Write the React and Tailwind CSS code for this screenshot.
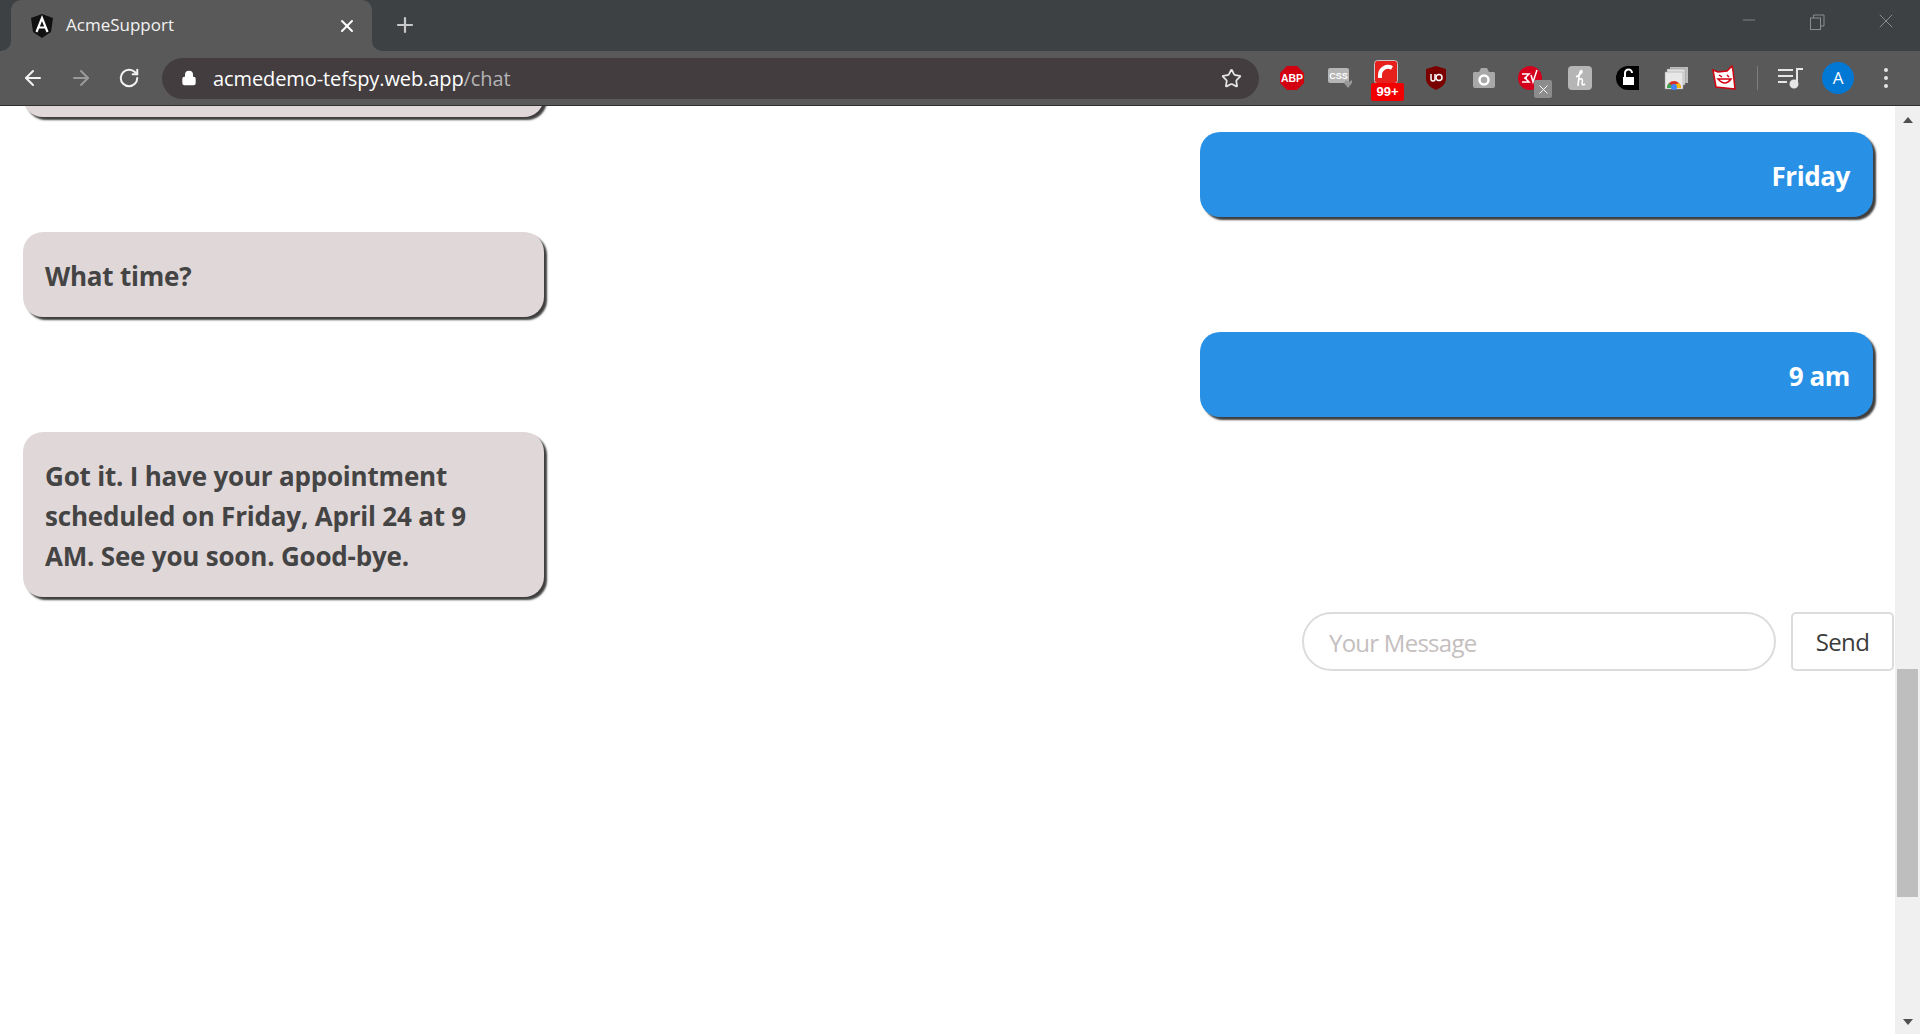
import React from "react";
import { ArrowLeft, ArrowRight, RotateCw, Lock, Star, Plus, X, Minus } from "lucide-react";

const font = "font-['Open_Sans','Noto_Sans',sans-serif]";

const LeftBubble = ({ children, className = "" }) => (
  <div className={`self-start ml-[23px] w-[521px] rounded-[20px] bg-[#e0d7d8] pl-[22px] pr-[40px] py-[22.5px] shadow-[3px_3px_2px_#3f3f3f] text-[#444444] text-[26px] leading-[40px] font-bold tracking-[-0.2px] ${className}`}>
    <div className="translate-y-[1px]">{children}</div>
  </div>
);

const RightBubble = ({ children }) => (
  <div className="self-end mr-[22px] w-[673px] h-[85px] rounded-[20px] bg-[#2891e6] pr-[23px] pt-[3px] flex items-center justify-end shadow-[3px_3px_2px_#3f3f3f] text-white text-[26px] font-bold tracking-[-0.4px]">
    {children}
  </div>
);

const Slot = ({ children }) => (
  <div className="relative w-12 h-12 flex items-center justify-center shrink-0">{children}</div>
);

const Extensions = () => (
  <div className="flex items-center ml-[9px]">
    <Slot>
      <svg width="26" height="26" viewBox="0 0 26 26">
        <polygon points="8,1 18,1 25,8 25,18 18,25 8,25 1,18 1,8" fill="#d3000f" />
        <text x="13" y="17" textAnchor="middle" fontSize="10.5" fontWeight="700" fill="#fff" fontFamily="Liberation Sans">ABP</text>
      </svg>
    </Slot>
    <Slot>
      <svg width="26" height="26" viewBox="0 0 26 26">
        <rect x="1" y="3" width="21" height="15" rx="2" fill="#b5b5b5" />
        <text x="11.5" y="14" textAnchor="middle" fontSize="9" fontWeight="700" fill="#fff" fontFamily="Liberation Sans">CSS</text>
        <polygon points="19,15 22,17 25,15 25,18 21,23 17,18" fill="#999" />
      </svg>
    </Slot>
    <Slot>
      <svg width="24" height="24" viewBox="0 0 24 24" className="-mt-3 -ml-1">
        <rect x="0.5" y="0.5" width="23" height="23" rx="3" fill="#e8201c" stroke="#c4c4c4" />
        <path d="M6 18 V15 A8 8 0 0 1 18 8" stroke="#fff" strokeWidth="4" fill="none" />
      </svg>
      <span className="absolute left-[7px] top-[29px] w-[33px] h-[18px] rounded-[2px] bg-[#f00000] text-white text-[13px] leading-[18px] font-bold text-center font-['Liberation_Sans',sans-serif]">99+</span>
    </Slot>
    <Slot>
      <svg width="22" height="26" viewBox="0 0 22 26">
        <path d="M11 1 L21 4 L21 15 Q20 21 11 25 Q2 21 1 15 L1 4 Z" fill="#7b0000" />
        <path d="M6 9 V14 Q6 16 8 16 Q10 16 10 14 V9" stroke="#fff" strokeWidth="1.5" fill="none" />
        <circle cx="14" cy="12.5" r="3" stroke="#fff" strokeWidth="1.5" fill="none" />
      </svg>
    </Slot>
    <Slot>
      <svg width="24" height="22" viewBox="0 0 24 22">
        <path d="M2 5 H7 L9 1 H15 L17 5 H22 Q23 5 23 7 V19 Q23 21 21 21 H3 Q1 21 1 19 V7 Q1 5 2 5 Z" fill="#a8a8a8" />
        <circle cx="12" cy="13" r="4.5" stroke="#fff" strokeWidth="2.5" fill="none" />
      </svg>
    </Slot>
    <Slot>
      <svg width="24" height="24" viewBox="0 0 24 24" className="-ml-1">
        <circle cx="12" cy="12" r="12" fill="#d5001c" />
        <path d="M4 8 H11 L7 12 L11 16 H4 M6 12 H9 M13 9 L15 16 L19 4" stroke="#fff" strokeWidth="1.5" fill="none" />
      </svg>
      <span className="absolute left-[26px] top-[26px] w-[18px] h-[18px] rounded-[2px] bg-[#8c8c8c] flex items-center justify-center">
        <X size={15} color="#fff" strokeWidth={1.5} />
      </span>
    </Slot>
    <Slot>
      <div className="w-6 h-6 rounded-[4px] bg-[#b5b5b5] flex items-center justify-center">
        <svg width="14" height="18" viewBox="0 0 14 18" fill="none" stroke="#fff" strokeWidth="1.6">
          <path d="M5 17 Q6 6 7 3 Q8 1 9 2 Q10 4 3 8 M5 12 Q7 9 9 10 Q10 11 9 14 Q9 17 12 15" />
        </svg>
      </div>
    </Slot>
    <Slot>
      <svg width="24" height="24" viewBox="0 0 24 24">
        <path d="M12 0 H23 V24 H12 A12 12 0 0 1 12 0 Z" fill="#000" />
        <rect x="7" y="11" width="11" height="8" fill="#fff" />
        <path d="M9 11 V7 A3.5 3.5 0 0 1 16 7" stroke="#fff" strokeWidth="2" fill="none" />
      </svg>
    </Slot>
    <Slot>
      <svg width="24" height="24" viewBox="0 0 24 24">
        <rect x="6" y="1" width="18" height="16" fill="#bdbdbd" />
        <rect x="3" y="3" width="18" height="16" fill="#e2e2e2" stroke="#888" strokeWidth="0.5" />
        <rect x="1" y="6" width="18" height="17" fill="#e8e8e8" stroke="#999" strokeWidth="0.5" />
        <path d="M3 22 A7 7 0 0 1 17 22 Z" fill="#d93025" />
        <path d="M10 22 H17 A7 7 0 0 0 15 17 L10 19 Z" fill="#fbbc04" />
        <path d="M3 22 A7 7 0 0 1 5 17 L10 22 Z" fill="#34a853" />
        <circle cx="10" cy="21" r="3" fill="#4285f4" />
      </svg>
    </Slot>
    <Slot>
      <svg width="24" height="26" viewBox="0 0 24 26">
        <path d="M1 5 L6 7 L15 6 L20 1 L21 6 L23 24 L4 22 Z" fill="#fff" stroke="#d3000f" strokeWidth="1.5" />
        <path d="M7 10 L10 12 M15 10 L17 12 M6 14 Q13 22 19 14 Z" stroke="#d3000f" strokeWidth="1.5" fill="none" />
      </svg>
    </Slot>
  </div>
);

const ChromeBar = () => (
  <div className={`shrink-0 font-['Open_Sans',sans-serif]`}>
    <div className="h-[51px] bg-[#3e4144] flex items-stretch">
      <div className="relative ml-[11px] w-[361px] bg-[#595959] rounded-t-[10px] flex items-center pl-[20px] pr-[15px] text-[#f2f2f2]">
        <span className="absolute -left-[10px] bottom-0 w-[10px] h-[10px] bg-[#595959]"><span className="block w-full h-full bg-[#3e4144] rounded-br-[10px]" /></span>
        <span className="absolute -right-[10px] bottom-0 w-[10px] h-[10px] bg-[#595959]"><span className="block w-full h-full bg-[#3e4144] rounded-bl-[10px]" /></span>
        <svg width="22" height="24" viewBox="0 0 22 24">
          <path d="M11 0 L22 4 L20 18 L11 24 L2 18 L0 4 Z" fill="#111" />
          <path d="M5.5 18 L11 4 L16.5 18 M7.5 13.5 H14.5" stroke="#fff" strokeWidth="2.2" fill="none" />
        </svg>
        <span className="ml-[13px] -mt-[2px] text-[17px] tracking-[0px]">AcmeSupport</span>
        <X size={20} strokeWidth={2.4} className="ml-auto text-white" />
      </div>
      <Plus size={24} strokeWidth={2.2} className="ml-[21px] -mt-[2px] self-center text-[#c8c8c8]" />
      <div className="ml-auto flex items-start pt-[8px] text-[#8a8c8e]">
        <Minus size={20} strokeWidth={1} className="mr-[50px] mt-[2px]" />
        <svg width="16" height="16" viewBox="0 0 16 16" className="mr-[49px] mt-[6px]" fill="none" stroke="currentColor">
          <rect x="1.5" y="4" width="10" height="11.5" />
          <path d="M4.5 4 V1 H15 V12 H11.5" />
        </svg>
        <X size={24} strokeWidth={1} className="mr-[22px] mt-[1px]" />
      </div>
    </div>
    <div className="h-[55px] bg-[#595959] border-b border-[#303030] flex items-center pl-[9px] text-[#f2f2f2]">
      <Slot><ArrowLeft size={24} strokeWidth={2} /></Slot>
      <Slot><ArrowRight size={24} strokeWidth={2} className="text-[#9a9a9a]" /></Slot>
      <Slot><RotateCw size={22} strokeWidth={2.2} /></Slot>
      <div className="ml-[9px] w-[1097px] h-[41px] rounded-full bg-[#433d40] flex items-center pl-[19px] pr-[17px]">
        <Lock size={16} fill="#fff" strokeWidth={2} className="text-white" />
        <span className="ml-[16px] pt-[1px] text-[20px] tracking-[-0.1px] text-white">acmedemo-tefspy.web.app<span className="text-[#b4b4b4]">/chat</span></span>
        <Star size={21} strokeWidth={2} className="ml-auto text-[#e6e6e6]" />
      </div>
      <Extensions />
      <div className="ml-[9px] w-px h-6 bg-[#7d7d7d]" />
      <div className="ml-[8px]" />
      <Slot>
        <svg width="26" height="22" viewBox="0 0 26 22" fill="none" stroke="#e6e6e6" strokeWidth="2">
          <path d="M1 3 H16 M1 9 H16 M1 15 H10" />
          <path d="M20 17 V2 H26" />
          <circle cx="17" cy="17" r="3.5" fill="#e6e6e6" />
        </svg>
      </Slot>
      <Slot>
        <div className="w-8 h-8 rounded-full bg-[#0078d4] flex items-center justify-center text-white text-[17px]">A</div>
      </Slot>
      <Slot>
        <div className="flex flex-col gap-[4px]">
          <span className="w-1 h-1 rounded-full bg-[#e6e6e6]" />
          <span className="w-1 h-1 rounded-full bg-[#e6e6e6]" />
          <span className="w-1 h-1 rounded-full bg-[#e6e6e6]" />
        </div>
      </Slot>
    </div>
  </div>
);

const Scrollbar = () => (
  <div className="w-[25px] shrink-0 bg-[#f0f0f0] flex flex-col items-center">
    <div className="mt-[11px] w-0 h-0 border-x-[5px] border-x-transparent border-b-[6px] border-b-[#505050]" />
    <div className="mt-[546px] w-[21px] h-[228px] bg-[#bebebe]" />
    <div className="mt-auto mb-[9px] w-0 h-0 border-x-[5px] border-x-transparent border-t-[6px] border-t-[#505050]" />
  </div>
);

export default function App() {
  return (
    <div className={`h-screen flex flex-col overflow-hidden bg-white ${font}`}>
      <ChromeBar />
      <div className="flex-1 min-h-0 flex">
        <div className="flex-1 min-w-0 overflow-hidden flex flex-col gap-[15px]">
          <LeftBubble className="h-[85px] -mt-[74px] shrink-0"> </LeftBubble>
          <RightBubble>Friday</RightBubble>
          <LeftBubble>What time?</LeftBubble>
          <RightBubble>9 am</RightBubble>
          <LeftBubble>Got it. I have your appointment scheduled on Friday, April 24 at 9 AM. See you soon. Good-bye.</LeftBubble>
          <div className="flex justify-end gap-[15px] mr-px">
            <input
              placeholder="Your Message"
              className="w-[474px] h-[59px] rounded-full border-2 border-[#dcdcdc] px-[25px] pt-[1px] text-[24px] tracking-[-0.75px] placeholder:text-[#c4bebe] outline-none"
            />
            <button className="w-[103px] h-[59px] rounded-[5px] border-2 border-[#dcdcdc] pt-[1px] text-[24px] tracking-[-0.6px] text-[#3c3c3c] bg-white">
              Send
            </button>
          </div>
        </div>
        <Scrollbar />
      </div>
    </div>
  );
}
